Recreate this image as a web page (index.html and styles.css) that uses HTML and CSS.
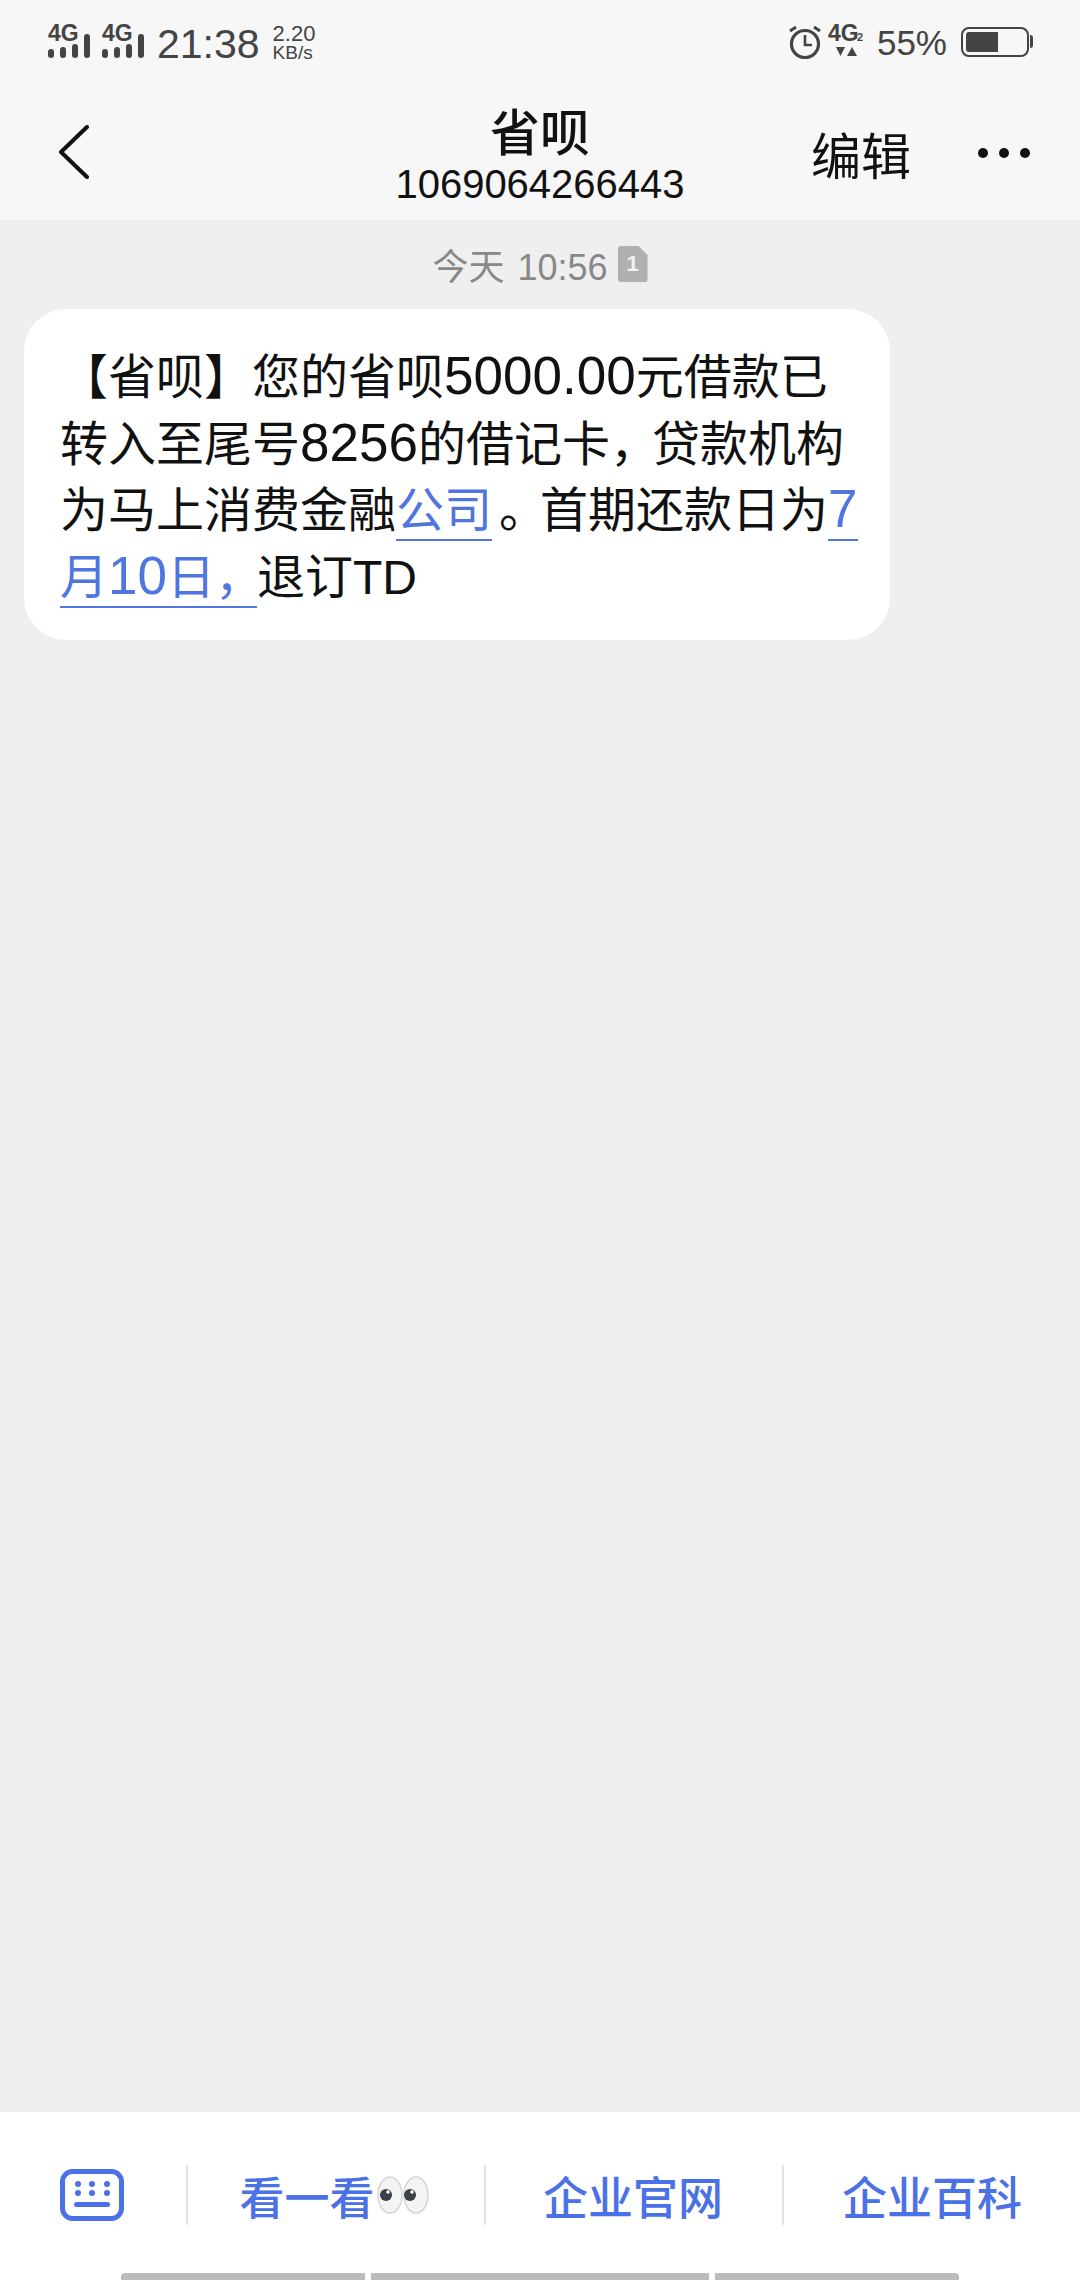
FILE: index.html
```html
<!DOCTYPE html>
<html lang="zh-CN">
<head>
<meta charset="utf-8">
<title>省呗</title>
<link rel="stylesheet" href="styles.css">
</head>
<body>
<div class="screen">
  <header class="head">
    <div class="status">
      <div class="status-left">
        <svg class="sig" width="43" height="42" viewBox="0 0 43 42"><text x="0" y="24" class="sig-t">4G</text><rect x="0" y="32" width="6" height="9" rx="3"/><rect x="12" y="30" width="6" height="11" rx="3"/><rect x="24" y="27" width="6" height="14" rx="3"/><rect x="36" y="17" width="6" height="24" rx="3"/></svg>
        <svg class="sig sig2" width="43" height="42" viewBox="0 0 43 42"><text x="0" y="24" class="sig-t">4G</text><rect x="0" y="32" width="6" height="9" rx="3"/><rect x="12" y="30" width="6" height="11" rx="3"/><rect x="24" y="27" width="6" height="14" rx="3"/><rect x="36" y="17" width="6" height="24" rx="3"/></svg>
        <span class="time">21:38</span>
        <span class="speed"><span>2.20</span><span class="unit">KB/s</span></span>
      </div>
      <div class="status-right">
        <svg width="36" height="36" viewBox="0 0 36 36" fill="none" stroke="#444" class="alarm"><circle cx="18" cy="20" r="13.5" stroke-width="3.2"/><path d="M18 11v10h7" stroke-width="2.6"/><path d="M3 7l6-4M33 7l-6-4" stroke-width="3"/></svg>
        <svg width="40" height="42" viewBox="0 0 40 42" class="net"><text x="0" y="23" class="net-t">4G</text><text x="29" y="23" class="net-s">2</text><path d="M8 29h9l-4.500 9zM19 38h10l-5-9z"/></svg>
        <span class="batt-t">55%</span>
        <span class="batt"><span class="batt-fill"></span></span>
      </div>
    </div>
    <div class="nav">
      <svg class="back" width="32" height="54" viewBox="0 0 32 54" fill="none"><path d="M29 2L3 27l26 25" stroke="#111" stroke-width="4" stroke-linecap="round" stroke-linejoin="round"/></svg>
      <div class="title">
        <div class="name">省呗</div>
        <div class="num">1069064266443</div>
      </div>
      <span class="edit">编辑</span>
      <span class="dots"><i></i><i></i><i></i></span>
    </div>
  </header>
  <main class="chat">
    <div class="stamp"><span class="stamp-t">今天 10:56</span><span class="sim">1</span></div>
    <div class="bubble"><span class="lb">【</span>省呗<span class="rb">】</span>您的省呗<span class="lat">5000.00</span>元借款已<br>转入至尾号<span class="lat">8256</span>的借记卡<span class="comma">，</span>贷款机构<br>为马上消费金融<a class="link">公司</a><span class="period">。</span>首期还款日为<a class="link"><span class="lat">7</span></a><br><a class="link">月<span class="lat">10</span>日<span class="comma">，</span></a>退订TD</div>
  </main>
  <footer class="foot">
    <div class="menu">
      <div class="kb">
        <svg width="64" height="52" viewBox="0 0 64 52" fill="none"><rect x="2.500" y="2.500" width="59" height="47" rx="10" stroke="#4a71e6" stroke-width="5"/><g fill="#4a71e6"><circle cx="18" cy="15" r="3"/><circle cx="32" cy="15" r="3"/><circle cx="47" cy="15" r="3"/><circle cx="18" cy="24" r="3"/><circle cx="32" cy="24" r="3"/><circle cx="47" cy="24" r="3"/><rect x="14" y="33" width="36" height="5" rx="2.500"/></g></svg>
      </div>
      <div class="item item-look">
        <span>看一看</span>
        <svg width="54" height="40" viewBox="0 0 54 40"><g stroke="#d5d5d5" stroke-width="1.500" fill="#f4f4f4"><ellipse cx="13" cy="20" rx="12" ry="18"/><ellipse cx="39" cy="20" rx="12" ry="18"/></g><circle cx="9" cy="20" r="6" fill="#3a3f46"/><circle cx="33" cy="20" r="6" fill="#3a3f46"/><circle cx="11" cy="17" r="1.800" fill="#fff"/><circle cx="35" cy="17" r="1.800" fill="#fff"/></svg>
      </div>
      <div class="item">企业官网</div>
      <div class="item">企业百科</div>
    </div>
    <div class="bars"><i class="bar b1"></i><i class="bar b2"></i><i class="bar b3"></i></div>
  </footer>
</div>
</body>
</html>
```
FILE: styles.css
```css
* { box-sizing: border-box; }
html, body { margin: 0; padding: 0; }
body { width: 1080px; height: 2280px; overflow: hidden; font-family: "Liberation Sans", Arial, "Noto Sans CJK SC", sans-serif; }
.screen { width: 1080px; height: 2280px; display: flex; flex-direction: column; background: #efefef; }

.head { height: 222px; flex: none; background: #f7f7f7; border-bottom: 2px solid #ececec; }
.status { height: 84px; display: flex; justify-content: space-between; padding: 20px 51px 0 48px; color: #444; }
.status-left, .status-right { display: flex; align-items: flex-start; }
.sig { fill: #444; margin-top: -3px; }
.sig2 { margin-left: 11px; }
.sig-t { font: bold 23px "Liberation Sans", sans-serif; }
.time { font-size: 41px; line-height: 46px; margin-left: 12px; margin-top: 1px; }
.speed { display: flex; flex-direction: column; font-size: 22px; line-height: 20px; margin-left: 13px; margin-top: 4px; }
.unit { font-size: 19px; line-height: 18px; }
.alarm { margin-top: 4px; }
.net { fill: #444; margin: -2px 0 0 5px; }
.net-t { font: bold 23px "Liberation Sans", sans-serif; }
.net-s { font: bold 11px "Liberation Sans", sans-serif; }
.batt-t { font-size: 35px; line-height: 40px; margin: 3px 0 0 9px; }
.batt { width: 68px; height: 30px; border: 2px solid #444; border-radius: 8px; margin: 7px 0 0 14px; padding: 3px; position: relative; }
.batt::after { content: ""; position: absolute; right: -6px; top: 6px; width: 3px; height: 13px; background: #444; border-radius: 0 3px 3px 0; }
.batt-fill { display: block; width: 32px; height: 20px; background: #444; border-radius: 3px 0 0 3px; }

.nav { height: 136px; position: relative; }
.back { position: absolute; left: 58px; top: 41px; }
.title { position: absolute; left: 340px; width: 400px; top: 15px; text-align: center; color: #111; }
.name { font-size: 50px; line-height: 60px; font-weight: 500; font-family: "Noto Sans CJK SC", sans-serif; }
.num { font-size: 40px; line-height: 50px; }
.edit { position: absolute; left: 811px; top: 39px; font-size: 50px; line-height: 60px; color: #111; font-family: "Noto Sans CJK SC", sans-serif; }
.dots { position: absolute; left: 978px; top: 64px; display: flex; gap: 11px; }
.dots i { width: 10px; height: 10px; border-radius: 50%; background: #111; }

.chat { flex: 1; padding: 21px 24px 0; }
.stamp { display: flex; justify-content: center; align-items: center; height: 42px; gap: 10px; color: #888; font-size: 36px; }
.stamp-t { word-spacing: 3px; }
.sim { width: 30px; height: 36px; background: #b0b0b0; color: #f2f2f2; font-size: 22px; font-weight: bold; line-height: 36px; text-align: center; border-radius: 3px; clip-path: polygon(0 0, 70% 0, 100% 25%, 100% 100%, 0 100%); }
.bubble { width: 866px; height: 331px; margin-top: 24px; background: #fff; border-radius: 42px; padding: 36px 36px 0; font-size: 48px; line-height: 66.500px; color: #111; white-space: nowrap; }
.lat { font-size: 53px; line-height: 0; }
.comma { letter-spacing: -6px; }
.period { margin-left: 7px; letter-spacing: -7px; }
.link { color: #4f75df; border-bottom: 2px solid #4f75df; padding-bottom: 2px; }

.foot { height: 168px; flex: none; background: #fff; position: relative; }
.menu { display: flex; height: 150px; align-items: center; padding-top: 16px; }
.kb { width: 188px; height: 60px; display: flex; align-items: center; padding-left: 60px; border-right: 2px solid #e4e4e4; flex: none; }
.item { flex: none; width: 298px; height: 60px; padding-right: 2px; display: flex; justify-content: center; align-items: center; gap: 2px; color: #4a71e6; font-size: 45px; font-weight: 500; font-family: "Noto Sans CJK SC", sans-serif; border-right: 2px solid #e4e4e4; }
.item:last-child { border-right: none; }
.bars { position: absolute; left: 121px; bottom: 0; display: flex; gap: 6px; }
.bar { height: 7px; background: #bcbcbc; display: block; }
.b1 { width: 244px; border-radius: 4px 0 0 0; }
.b2 { width: 338px; }
.b3 { width: 244px; border-radius: 0 4px 0 0; }
```
